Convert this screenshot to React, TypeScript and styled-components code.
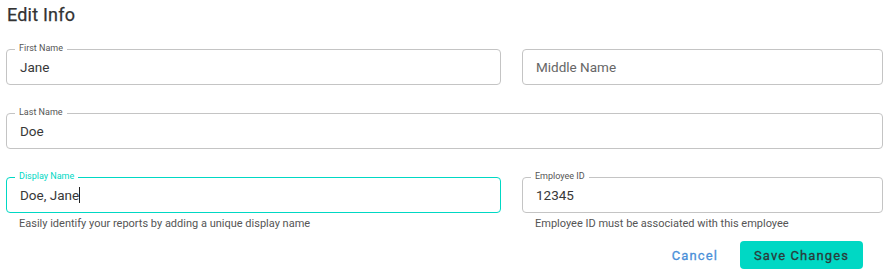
import React from "react";
import styled, { createGlobalStyle, css } from "styled-components";

const Global = createGlobalStyle`
  html, body { margin: 0; padding: 0; background: #ffffff; }
  body { font-family: Roboto, "Noto Sans", Arial, sans-serif; -webkit-font-smoothing: antialiased; }
  * { box-sizing: border-box; }
`;

const TEAL = "#00d8c4";

const Page = styled.div`
  width: 893px;
  height: 278px;
  padding: 4px 10px 0 6px;
`;

const Title = styled.h2`
  margin: 0 0 0 1px;
  font-size: 18px;
  line-height: 22px;
  font-weight: 400;
  color: #333333;
  letter-spacing: 0.2px;
  -webkit-text-stroke: 0.25px #333333;
`;

const Grid = styled.div`
  display: grid;
  grid-template-columns: 495px 1fr;
  column-gap: 21px;
  row-gap: 28px;
  margin-top: 23px;
`;

const Field = styled.div<{ $span?: boolean }>`
  position: relative;
  ${(p) => p.$span && css`grid-column: 1 / -1;`}
`;

const Box = styled.div<{ $focused?: boolean }>`
  height: 36px;
  border: 1px solid ${(p) => (p.$focused ? TEAL : "#c4c4c4")};
  border-radius: 4px;
  display: flex;
  align-items: center;
  padding: 0 13px;
  font-size: 13.5px;
  color: #383838;
`;

const Label = styled.span<{ $focused?: boolean }>`
  position: absolute;
  top: -6px;
  left: 9px;
  padding: 0 4px;
  background: #ffffff;
  font-size: 9px;
  line-height: 11px;
  color: ${(p) => (p.$focused ? TEAL : "#555555")};
`;

const Placeholder = styled.span`
  color: #666666;
`;

const Caret = styled.span`
  display: inline-block;
  width: 1px;
  height: 16px;
  background: #222222;
  vertical-align: -3px;
`;

const Helper = styled.div`
  margin-top: 4px;
  padding-left: 13px;
  font-size: 11px;
  line-height: 14px;
  color: #555555;
`;

const Actions = styled.div`
  display: flex;
  justify-content: flex-end;
  align-items: center;
  gap: 22px;
  margin-top: 10px;
  padding-right: 20px;
`;

const Button = styled.button<{ $primary?: boolean }>`
  font-family: Roboto, "Noto Sans", Arial, sans-serif;
  font-size: 13px;
  font-weight: 400;
  -webkit-text-stroke: 0.3px currentColor;
  letter-spacing: 1.1px;
  border: none;
  border-radius: 4px;
  height: 28px;
  cursor: pointer;
  ${(p) =>
    p.$primary
      ? css`
          background: ${TEAL};
          color: #2b3a3a;
          padding: 0 14px;
        `
      : css`
          background: transparent;
          color: #4a90d9;
          padding: 0;
        `}
`;

export default function App() {
  return (
    <>
      <Global />
      <Page>
        <Title>Edit Info</Title>
        <Grid>
          <Field>
            <Box>Jane</Box>
            <Label>First Name</Label>
          </Field>
          <Field>
            <Box>
              <Placeholder>Middle Name</Placeholder>
            </Box>
          </Field>
          <Field $span>
            <Box>Doe</Box>
            <Label>Last Name</Label>
          </Field>
          <Field>
            <Box $focused>
              Doe, Jane
              <Caret />
            </Box>
            <Label $focused>Display Name</Label>
            <Helper>Easily identify your reports by adding a unique display name</Helper>
          </Field>
          <Field>
            <Box>12345</Box>
            <Label>Employee ID</Label>
            <Helper>Employee ID must be associated with this employee</Helper>
          </Field>
        </Grid>
        <Actions>
          <Button>Cancel</Button>
          <Button $primary>Save Changes</Button>
        </Actions>
      </Page>
    </>
  );
}
